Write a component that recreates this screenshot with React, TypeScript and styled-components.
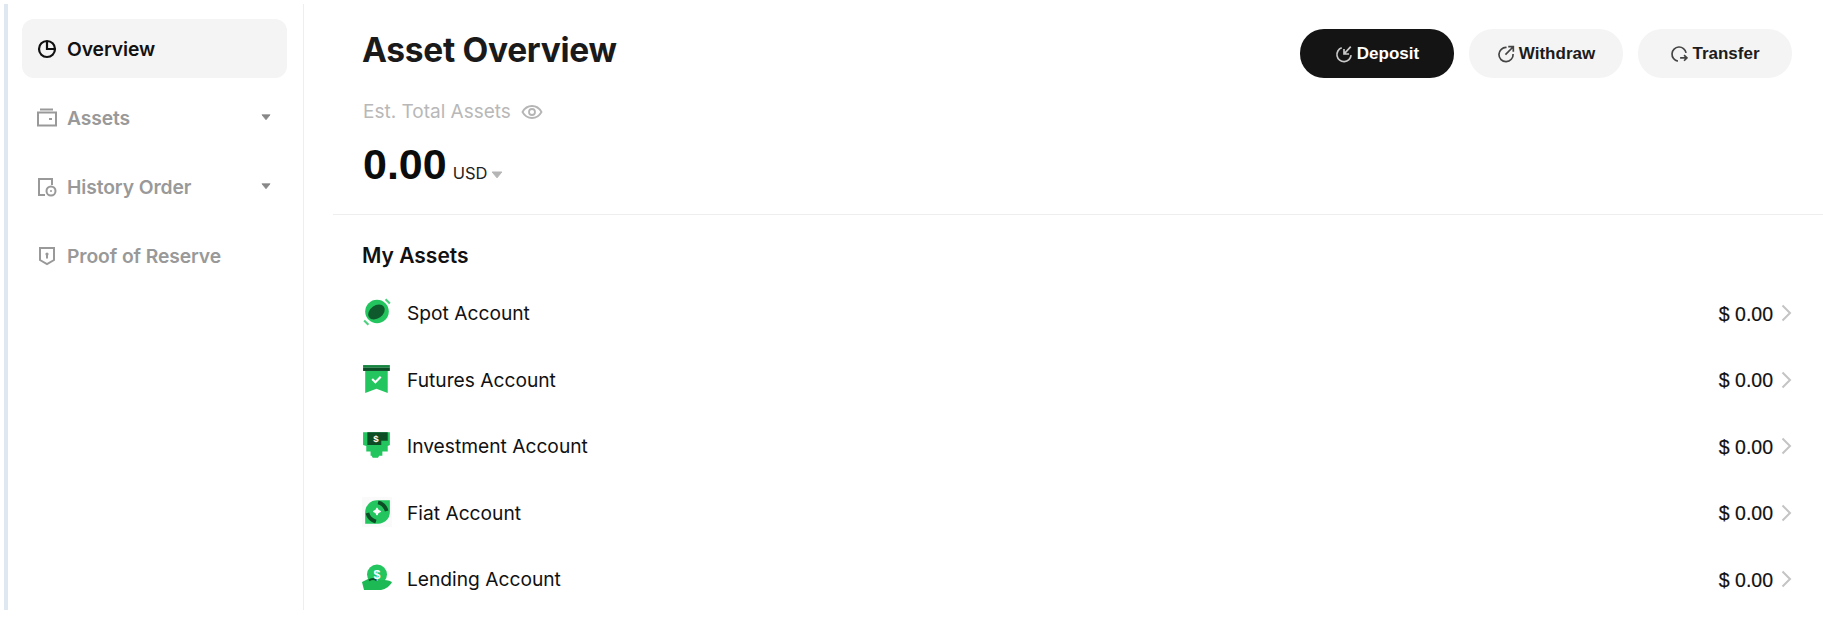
import React from 'react'
import styled, { createGlobalStyle } from 'styled-components'

const GlobalStyle = createGlobalStyle`
  html, body {
    margin: 0;
    padding: 0;
    height: 100%;
    background: #fff;
    overflow: hidden;
  }
  body {
    font-family: Inter, "Liberation Sans", sans-serif;
  }
`

const Page = styled.div`
  width: 1823px;
  height: 618px;
  padding: 4px 0 8px 4px;
  box-sizing: border-box;
  display: flex;
  overflow: hidden;
`

const Sidebar = styled.aside`
  width: 300px;
  flex: none;
  box-sizing: border-box;
  border-left: 4px solid #dfe7f1;
  border-right: 1px solid #eeeeee;
  padding: 15px 16px 0 14px;
  display: flex;
  flex-direction: column;
  gap: 10px;
`

const NavItem = styled.div<{ $active?: boolean }>`
  height: 59px;
  border-radius: 12px;
  padding: 0 16px 0 15px;
  box-sizing: border-box;
  display: flex;
  align-items: center;
  gap: 10px;
  font-size: 19.3px;
  font-weight: 600;
  letter-spacing: -0.1px;
  color: ${(p) => (p.$active ? '#111111' : '#999999')};
  background: ${(p) => (p.$active ? '#f4f4f4' : 'transparent')};
`

const NavLabel = styled.span`
  flex: 1;
`

const Main = styled.main`
  flex: 1;
  min-width: 0;
  display: flex;
  flex-direction: column;
`

const Header = styled.header`
  height: 211px;
  flex: none;
  box-sizing: border-box;
  margin-left: 29px;
  border-bottom: 1px solid #eeeeee;
  padding: 25px 31px 0 30px;
  display: flex;
  justify-content: space-between;
  align-items: flex-start;
`

const Summary = styled.div`
  display: flex;
  flex-direction: column;
`

const Title = styled.h1`
  margin: 0 0 0 -1px;
  font-size: 33.5px;
  line-height: 42px;
  font-weight: 700;
  letter-spacing: -0.3px;
  color: #1a1a1a;
`

const EstRow = styled.div`
  margin-top: 29px;
  display: flex;
  align-items: center;
  gap: 10px;
  font-size: 19px;
  line-height: 24px;
  color: #b8b8b8;
`

const BalanceRow = styled.div`
  margin-top: 17px;
  display: flex;
  align-items: baseline;
`

const Balance = styled.span`
  font-family: "Liberation Sans", Arial, sans-serif;
  font-size: 43px;
  line-height: 46px;
  font-weight: 700;
  color: #0c0c0c;
`

const Currency = styled.span`
  margin: 0 4px 0 6px;
  font-size: 16.5px;
  color: #222222;
`

const Actions = styled.div`
  display: flex;
  gap: 15px;
`

const ActionButton = styled.button<{ $primary?: boolean }>`
  width: 154px;
  height: 49px;
  border: none;
  border-radius: 24px;
  display: flex;
  align-items: center;
  justify-content: center;
  gap: 4px;
  font-family: "Liberation Sans", Arial, sans-serif;
  font-size: 17px;
  font-weight: 700;
  color: ${(p) => (p.$primary ? '#ffffff' : '#1c1c1c')};
  background: ${(p) => (p.$primary ? '#141414' : '#f4f4f4')};
`

const AssetsSection = styled.section`
  padding: 27px 31px 0 58px;
`

const SectionTitle = styled.h2`
  margin: 0 0 10px;
  font-size: 21px;
  line-height: 28px;
  font-weight: 600;
  color: #111111;
`

const AssetRow = styled.div`
  height: 66.5px;
  display: flex;
  align-items: center;
`

const IconSlot = styled.span`
  width: 45px;
  flex: none;
  display: flex;
  align-items: center;
  margin-top: -2px;
`

const AssetName = styled.span`
  flex: 1;
  font-size: 19.2px;
  color: #111111;
`

const Amount = styled.span`
  margin-top: 2px;
  font-family: "Liberation Sans", Arial, sans-serif;
  font-size: 19.5px;
  color: #111111;
  -webkit-text-stroke: 0.2px #111111;
`

const Chevron = styled.svg`
  margin-left: 8px;
  flex: none;
`

const Caret = ({ color, size = 10 }: { color: string; size?: number }) => (
  <svg width={size} height={size * 0.65} viewBox="0 0 12 8">
    <path d="M1 1h10L6 7z" fill={color} stroke={color} strokeLinejoin="round" />
  </svg>
)

const PieIcon = () => (
  <svg width="20" height="20" viewBox="0 0 20 20" fill="none" stroke="#111" strokeWidth="2.2">
    <circle cx="10" cy="10" r="8" />
    <path d="M10 2v8h8" />
  </svg>
)

const WalletIcon = () => (
  <svg width="20" height="20" viewBox="0 0 20 20" fill="none" stroke="#999" strokeWidth="2">
    <path d="M3 1.500h13" />
    <rect x="1" y="4.500" width="18" height="13" />
    <path d="M12 11h3" />
  </svg>
)

const HistoryIcon = () => (
  <svg width="20" height="20" viewBox="0 0 20 20" fill="none" stroke="#999" strokeWidth="2">
    <path d="M8 18H2V2h13v6" />
    <circle cx="14" cy="14" r="4.500" />
    <circle cx="14" cy="14" r="1" fill="#999" stroke="none" />
  </svg>
)

const ShieldIcon = () => (
  <svg width="20" height="20" viewBox="0 0 20 20" fill="none" stroke="#999" strokeWidth="2">
    <path d="M3 2h14v12l-7 4-7-4z" />
    <circle cx="10" cy="8" r="1.600" fill="#999" stroke="none" />
    <path d="M10 9v3.500" />
  </svg>
)

const EyeIcon = () => (
  <svg width="22" height="22" viewBox="0 0 22 22" fill="none" stroke="#b5b5b5" strokeWidth="1.800">
    <path d="M1.500 11C4 6.500 7.500 5 11 5s7 1.500 9.500 6c-2.500 4.500-6 6-9.500 6s-7-1.500-9.500-6z" />
    <circle cx="11" cy="11" r="3" />
  </svg>
)

const DepositIcon = () => (
  <svg width="18" height="18" viewBox="0 0 16 16" fill="none" stroke="#c8c8c8" strokeWidth="1.500">
    <path d="M6 2.500A6.300 6.300 0 1 0 14.300 9" />
    <path d="M14 1.500L8.500 7.500M8 3.500v4.500h4.500" />
  </svg>
)

const WithdrawIcon = () => (
  <svg width="18" height="18" viewBox="0 0 16 16" fill="none" stroke="#444" strokeWidth="1.500">
    <path d="M8.500 2.200A6.300 6.300 0 1 0 14.300 8" />
    <path d="M7.500 8.500L14 2M10 1.500h4.500V6" />
  </svg>
)

const TransferIcon = () => (
  <svg width="18" height="18" viewBox="0 0 16 16" fill="none" stroke="#444" strokeWidth="1.500">
    <path d="M14.300 7A6.300 6.300 0 1 0 7 14.300" />
    <path d="M9 11.500h6M12.500 9l2.500 2.500-2.500 2.500" />
  </svg>
)

const SpotIcon = () => (
  <svg width="30" height="30" viewBox="0 0 28 28">
    <circle cx="14" cy="13.500" r="11" fill="#22c55e" />
    <ellipse cx="13.500" cy="14" rx="8.500" ry="6" transform="rotate(-35 13.500 14)" fill="#0f5a2c" />
    <path d="M22 2l4 4M2 22l4 4" stroke="#4ed07f" strokeWidth="2" />
  </svg>
)

const FuturesIcon = () => (
  <svg width="30" height="30" viewBox="0 0 28 28">
    <rect x="1" y="1" width="25" height="2.500" fill="#14843f" />
    <rect x="1" y="3.500" width="25" height="3" fill="#0d4d26" />
    <path d="M3 6.500h21V27l-10.500-4L3 27z" fill="#22c55e" />
    <path d="M9.500 14l3 3 5-5" fill="none" stroke="#fff" strokeWidth="2" />
  </svg>
)

const InvestIcon = () => (
  <svg width="30" height="30" viewBox="0 0 28 28">
    <path d="M1 2h25v12l-2 1v5h-5v4h-3l-1 2h-5l-1-2H8v-4H4v-5l-3-1z" fill="#22c55e" />
    <path d="M5 2h19v8h-6v4H5z" fill="#0d4d26" />
    <text x="13" y="11" textAnchor="middle" fontSize="9" fontWeight="700" fill="#fff" fontFamily="Liberation Sans">$</text>
  </svg>
)

const FiatIcon = () => (
  <svg width="30" height="30" viewBox="0 0 28 28">
    <defs>
      <clipPath id="fiat-leaf">
        <path d="M14 3h12v11a11 11 0 0 1-11 11H3V14A11 11 0 0 1 14 3z" />
      </clipPath>
    </defs>
    <rect width="28" height="28" fill="#fafafa" />
    <path d="M14 3h12v11a11 11 0 0 1-11 11H3V14A11 11 0 0 1 14 3z" fill="#22c55e" />
    <g clipPath="url(#fiat-leaf)" fill="none" stroke="#0d4d26" strokeWidth="3.500">
      <path d="M15 5q6 1.500 8 8" />
      <path d="M5 15q1.500 6 8 8" />
    </g>
    <path d="M14 10q.500 3 3.500 3.500-3 .500-3.500 3.500-.500-3-3.500-3.500 3-.500 3.500-3.500z" fill="#fff" stroke="#fff" />
  </svg>
)

const LendingIcon = () => (
  <svg width="30" height="28" viewBox="0 0 30 28">
    <circle cx="15" cy="10.500" r="10" fill="#22c55e" />
    <path d="M0 18l7-3.500c3-1 6 0 8 1.500h5c3 0 6 0 10 2-2 4-6 7-11 8H2z" fill="#1db954" />
    <path d="M7 16.500q4-3 8 0" fill="none" stroke="#0d4d26" strokeWidth="2" />
    <text x="15" y="14.500" textAnchor="middle" fontSize="12.500" fontWeight="700" fill="#fff" fontFamily="Liberation Sans">$</text>
  </svg>
)

const accounts = [
  { name: 'Spot Account', icon: <SpotIcon /> },
  { name: 'Futures Account', icon: <FuturesIcon /> },
  { name: 'Investment Account', icon: <InvestIcon /> },
  { name: 'Fiat Account', icon: <FiatIcon /> },
  { name: 'Lending Account', icon: <LendingIcon /> },
]

export default function App() {
  return (
    <>
      <GlobalStyle />
      <Page>
        <Sidebar>
          <NavItem $active>
            <PieIcon />
            <NavLabel>Overview</NavLabel>
          </NavItem>
          <NavItem>
            <WalletIcon />
            <NavLabel>Assets</NavLabel>
            <Caret color="#888" />
          </NavItem>
          <NavItem>
            <HistoryIcon />
            <NavLabel>History Order</NavLabel>
            <Caret color="#888" />
          </NavItem>
          <NavItem>
            <ShieldIcon />
            <NavLabel>Proof of Reserve</NavLabel>
          </NavItem>
        </Sidebar>
        <Main>
          <Header>
            <Summary>
              <Title>Asset Overview</Title>
              <EstRow>
                Est. Total Assets
                <EyeIcon />
              </EstRow>
              <BalanceRow>
                <Balance>0.00</Balance>
                <Currency>USD</Currency>
                <Caret color="#b5b5b5" size={12} />
              </BalanceRow>
            </Summary>
            <Actions>
              <ActionButton $primary>
                <DepositIcon />
                Deposit
              </ActionButton>
              <ActionButton>
                <WithdrawIcon />
                Withdraw
              </ActionButton>
              <ActionButton>
                <TransferIcon />
                Transfer
              </ActionButton>
            </Actions>
          </Header>
          <AssetsSection>
            <SectionTitle>My Assets</SectionTitle>
            {accounts.map((a) => (
              <AssetRow key={a.name}>
                <IconSlot>{a.icon}</IconSlot>
                <AssetName>{a.name}</AssetName>
                <Amount>$ 0.00</Amount>
                <Chevron width="11" height="18" viewBox="0 0 11 18" fill="none" stroke="#c4c4c4" strokeWidth="2">
                  <path d="M1.500 1.500L9 9l-7.500 7.500" />
                </Chevron>
              </AssetRow>
            ))}
          </AssetsSection>
        </Main>
      </Page>
    </>
  )
}
